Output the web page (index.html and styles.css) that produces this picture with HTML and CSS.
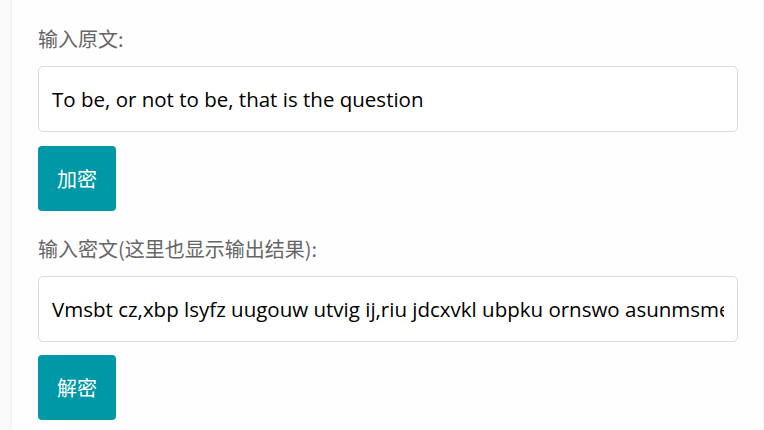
FILE: index.html
```html
<!DOCTYPE html>
<html lang="zh-CN">
<head>
<meta charset="utf-8">
<title>加密解密</title>
<link rel="stylesheet" href="styles.css">
</head>
<body>
<div class="page">
  <div class="card">
    <div class="group">
      <label class="label" for="plain">输入原文:</label>
      <input class="field" id="plain" type="text" value="To be, or not to be, that is the question">
      <button class="btn" type="button">加密</button>
    </div>
    <div class="group group-second">
      <label class="label" for="cipher">输入密文(这里也显示输出结果):</label>
      <input class="field" id="cipher" type="text" value="Vmsbt cz,xbp lsyfz uugouw utvig ij,riu jdcxvkl ubpku ornswo asunmsmek">
      <button class="btn btn-last" type="button">解密</button>
    </div>
  </div>
</div>
</body>
</html>
```

FILE: styles.css
```css
html, body {
  margin: 0;
  padding: 0;
  height: 100%;
}
body {
  background: #f9f9f9;
  font-family: "Open Sans", "Noto Sans CJK SC", sans-serif;
  overflow: hidden;
}
.page {
  padding-left: 12px;
  height: 100%;
}
.card {
  width: 751px;
  height: 100%;
  box-sizing: border-box;
  background: #fefefe;
  box-shadow: 0 0 3px rgba(0, 0, 0, 0.08);
  padding: 24px 25px 0 26px;
}
.group {
  display: flex;
  flex-direction: column;
  align-items: flex-start;
}
.group-second {
  margin-top: 23px;
}
.label {
  display: block;
  font-family: "Noto Sans CJK SC", sans-serif;
  font-size: 20px;
  line-height: 30px;
  color: #666;
}
.field {
  margin-top: 12px;
  width: 700px;
  height: 66px;
  box-sizing: border-box;
  border: 1px solid #dcdcdc;
  border-radius: 5px;
  background: #fff;
  padding: 0 13px;
  font-family: "Open Sans", "Noto Sans CJK SC", sans-serif;
  font-size: 20.5px;
  color: #000;
  outline: none;
}
.btn {
  margin-top: 14px;
  width: 78px;
  height: 65px;
  border: none;
  border-radius: 4px;
  background: #0098a6;
  color: #fff;
  font-family: "Noto Sans CJK SC", sans-serif;
  font-size: 20px;
  padding: 0;
}
.btn-last {
  margin-top: 13px;
}
```
